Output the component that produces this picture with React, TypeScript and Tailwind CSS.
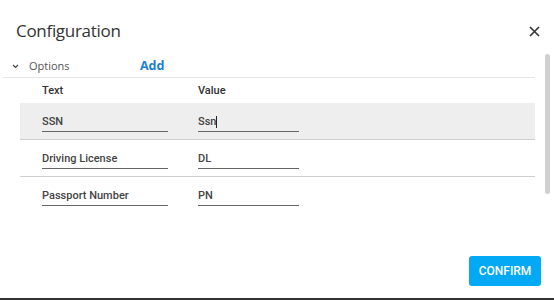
import React, { useState } from "react";

const rows = [
  { text: "SSN", value: "Ssn", active: true },
  { text: "Driving License", value: "DL", active: false },
  { text: "Passport Number", value: "PN", active: false },
];

const App = () => {
  const [open] = useState(true);

  return (
    <div className="w-[554px] h-[300px] bg-white flex flex-col border-b-2 border-[#333] overflow-hidden">
      {/* header */}
      <div className="mt-[10px] h-[43px] flex items-start justify-between pl-4 pr-[14px]">
        <h2 className="mt-[10px] text-[17px] leading-[22px] tracking-[-0.3px] text-[#333] font-['Open_Sans',sans-serif]">
          Configuration
        </h2>
        <svg width="11" height="11" viewBox="0 0 11 11" className="mt-[16px]">
          <path d="M1 1 L10 10 M10 1 L1 10" stroke="#333" strokeWidth="1.6" />
        </svg>
      </div>

      {/* body */}
      <div className="flex-1 flex">
        <div className="ml-[3px] w-[532px]">
          <div className="h-[25px] pt-[2px] flex items-center border-b border-[#e6e6e6]">
            <div className="w-[137px] flex items-center pl-[9px]">
              <svg width="7" height="5" viewBox="0 0 7 5" className="mt-[1px]">
                <path d="M1 1 L3.5 3.5 L6 1" stroke="#444" strokeWidth="1.2" fill="none" />
              </svg>
              <span className="ml-[10px] text-[11px] text-[#555] font-['Open_Sans',sans-serif]">
                Options
              </span>
            </div>
            <button className="text-[12.5px] font-bold text-[#1a7fd0] font-['Open_Sans',sans-serif] leading-none">
              Add
            </button>
          </div>

          <div className="h-[25px] pt-[2px] flex items-center pl-[39px] text-[11px] font-medium text-[#333] font-['Roboto',sans-serif]">
            <span className="w-[156px]">Text</span>
            <span>Value</span>
          </div>

          {open && (
            <div className="ml-[17px]">
              {rows.map((r, i) => (
                <div
                  key={r.text}
                  className={`h-[37px] pl-[22px] pt-[12px] flex ${
                    r.active ? "bg-[#eeeeee]" : ""
                  } ${i < rows.length - 1 ? "border-b border-[#cfcfcf]" : ""}`}
                >
                  <div className="w-[126px] h-[17px] border-b border-[#666] text-[11px] leading-[14px] font-medium text-[#444] font-['Roboto',sans-serif]">
                    {r.text}
                  </div>
                  <div className="ml-[30px] w-[101px] h-[17px] border-b border-[#666] text-[11px] leading-[14px] font-medium text-[#444] font-['Roboto',sans-serif] flex">
                    <span>{r.value}</span>
                    {r.active && <span className="w-px h-[12px] bg-[#222] mt-[1px]" />}
                  </div>
                </div>
              ))}
            </div>
          )}
        </div>
        <div className="ml-[10px] mt-[1px] w-[5px] h-[140px] rounded-full bg-[#d0d0d0]" />
      </div>

      {/* footer */}
      <div className="flex justify-end pr-[13px] pb-[12px]">
        <button className="w-[72px] h-[30px] rounded-[3px] bg-[#03a9f4] text-white text-[12px] font-medium font-['Roboto',sans-serif]">
          CONFIRM
        </button>
      </div>
    </div>
  );
};

export default App;
